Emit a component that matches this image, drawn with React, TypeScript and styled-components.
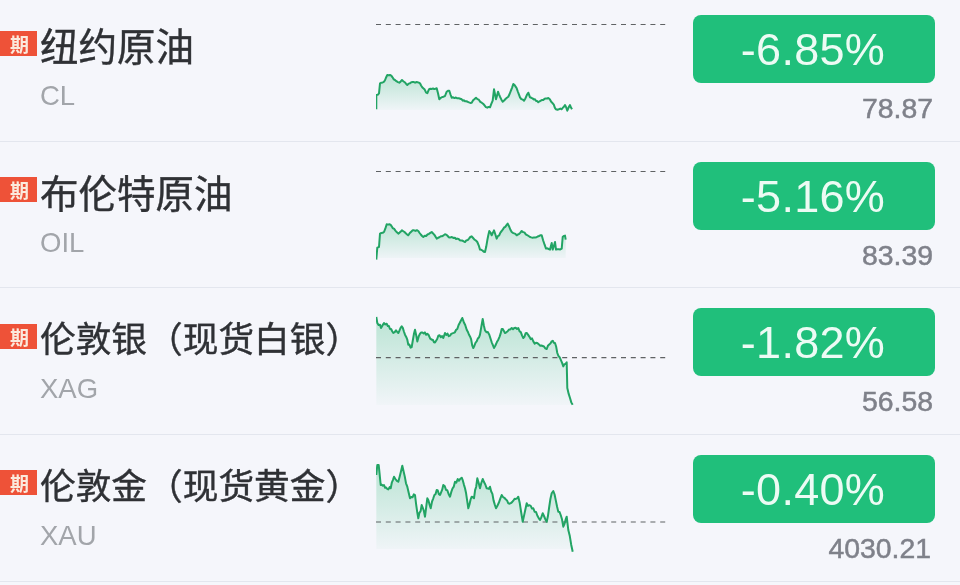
import { createGlobalStyle } from "styled-components"
import styled from "styled-components"

const GlobalStyle = createGlobalStyle`
  html, body {
    margin: 0;
    padding: 0;
    background: #f5f6fb;
  }
`

const Page = styled.div`
  width: 960px;
  height: 585px;
  overflow: hidden;
  background: #f5f6fb;
  font-family: "Liberation Sans", "Noto Sans CJK SC", sans-serif;
  filter: blur(0.4px);
`

const List = styled.div`
  margin-top: -5px;
`

const Row = styled.div`
  display: grid;
  grid-template-columns: 376px 290px 1fr;
  height: 146.67px;
  box-sizing: border-box;
  border-bottom: 1px solid #e3e6ee;
`

const Info = styled.div`
  padding-top: 26px;
`

const TitleLine = styled.div`
  display: flex;
  align-items: center;
  gap: 3px;
  height: 46px;
`

const Badge = styled.span`
  width: 37px;
  height: 25px;
  margin-top: -2px;
  background: #ee5238;
  color: #fbe9dc;
  font: 700 19px/25px "Noto Sans CJK SC", sans-serif;
  text-align: center;
  padding-left: 2px;
  box-sizing: border-box;
  flex: none;
`

const Title = styled.span<{ $size: number }>`
  font: 400 ${(p) => p.$size}px/46px "Noto Sans CJK SC", sans-serif;
  color: #2f3135;
  white-space: nowrap;
  -webkit-text-stroke: 0.4px #2f3135;
`

const Ticker = styled.div`
  margin: 12px 0 0 40px;
  font-size: 27.5px;
  line-height: 34px;
  color: #a2a5aa;
`

const Chart = styled.svg`
  display: block;
  width: 290px;
  height: 145px;
`

const Quote = styled.div`
  padding: 20px 25px 0 27px;
  display: flex;
  flex-direction: column;
  align-items: stretch;
`

const Pill = styled.div`
  height: 68px;
  padding-right: 2px;
  box-sizing: border-box;
  border-radius: 8px;
  background: #20bf7b;
  color: #ecfbf4;
  font-size: 45px;
  line-height: 70px;
  letter-spacing: 0.3px;
  text-align: center;
`

const Price = styled.div<{ $inset: number }>`
  margin-top: 8px;
  padding-right: ${(p) => p.$inset}px;
  font-size: 28.4px;
  line-height: 34px;
  color: #7f818a;
  text-align: right;
  -webkit-text-stroke: 0.5px #7f818a;
`

// small seeded wobble so the traced price lines stay jagged
const wobble = (seed: number) => {
  const v = Math.sin(seed * 127.1) * 43758.5453
  return (v - Math.floor(v)) * 2 - 1
}

const tracePath = (raw: number[], dy: number, noise: number) => {
  const out: [number, number][] = []
  for (let i = 0; i < raw.length - 2; i += 2) {
    const [x0, y0, x1, y1] = [raw[i], raw[i + 1], raw[i + 2], raw[i + 3]]
    const steps = Math.max(1, Math.round((x1 - x0) / 4))
    for (let s = 0; s < steps; s++) {
      const t = s / steps
      const jitter = s === 0 ? 0 : wobble(i * 7 + s) * noise
      out.push([(x0 + (x1 - x0) * t) / 3 - 6, (y0 + (y1 - y0) * t) / 3 + dy + jitter])
    }
  }
  out.push([raw[raw.length - 2] / 3 - 6, raw[raw.length - 1] / 3 + dy])
  return out
}

type Item = {
  name: string
  size: number
  ticker: string
  pct: string
  price: string
  priceInset: number
  dash: number
  floor: number
  dy: number
  noise: number
  line: number[]
}

const items: Item[] = [
  {
    name: "纽约原油",
    size: 38.5,
    ticker: "CL",
    pct: "-6.85%",
    price: "78.87",
    priceInset: 2,
    dash: 29.5,
    floor: 115,
    dy: 65,
    noise: 0.7,
    line: [
      19, 148, 19, 105, 27, 100, 30, 70, 42, 65, 52, 45, 60, 45, 75, 60, 88, 68, 96, 60, 112, 75, 128, 66,
      150, 70, 160, 85, 172, 100, 178, 87, 200, 85, 208, 118, 225, 108, 230, 95, 238, 92, 245, 113, 262, 115,
      275, 118, 285, 124, 305, 128, 318, 113, 335, 128, 352, 143, 360, 142, 368, 122, 372, 88, 378, 118,
      384, 95, 390, 110, 398, 125, 415, 110, 430, 72, 440, 85, 450, 112, 462, 122, 475, 98, 480, 112,
      495, 118, 505, 127, 520, 120, 535, 114, 548, 130, 558, 148, 575, 148, 585, 135, 592, 152, 600, 135, 606, 148,
    ],
  },
  {
    name: "布伦特原油",
    size: 38.5,
    ticker: "OIL",
    pct: "-5.16%",
    price: "83.39",
    priceInset: 2,
    dash: 29.5,
    floor: 116,
    dy: 68.3,
    noise: 0.7,
    line: [
      19, 148, 22, 112, 27, 110, 30, 70, 42, 65, 50, 42, 58, 42, 72, 55, 85, 70, 96, 60, 115, 75, 128, 60,
      145, 62, 160, 80, 185, 65, 200, 85, 225, 72, 240, 82, 262, 85, 285, 95, 305, 78, 322, 95, 330, 118,
      345, 125, 352, 90, 358, 62, 365, 75, 372, 60, 380, 85, 395, 62, 413, 40, 425, 65, 440, 75, 455, 62,
      480, 80, 495, 82, 515, 75, 528, 115, 540, 118, 545, 98, 548, 118, 555, 95, 558, 118, 575, 115, 578, 80, 585, 76, 587, 88,
    ],
  },
  {
    name: "伦敦银（现货白银）",
    size: 35.7,
    ticker: "XAG",
    pct: "-1.82%",
    price: "56.58",
    priceInset: 2,
    dash: 69.7,
    floor: 117,
    dy: 21.7,
    noise: 1.4,
    line: [
      19, 22, 22, 40, 30, 45, 33, 55, 42, 40, 50, 42, 60, 58, 70, 70, 78, 62, 85, 70, 95, 50, 105, 75, 112, 90,
      115, 105, 125, 112, 135, 60, 142, 95, 150, 72, 172, 72, 185, 90, 195, 98, 205, 78, 220, 85, 225, 70,
      240, 78, 262, 58, 277, 25, 290, 60, 300, 80, 310, 115, 320, 95, 330, 75, 338, 28, 345, 62, 358, 75,
      372, 115, 385, 90, 395, 58, 405, 70, 425, 55, 445, 55, 460, 85, 470, 70, 490, 95, 510, 108, 530, 118,
      545, 95, 555, 100, 562, 130, 572, 150, 580, 170, 590, 158, 592, 235, 600, 265, 608, 285,
    ],
  },
  {
    name: "伦敦金（现货黄金）",
    size: 35.7,
    ticker: "XAU",
    pct: "-0.40%",
    price: "4030.21",
    priceInset: 4,
    dash: 87,
    floor: 114,
    dy: 20,
    noise: 1.8,
    line: [
      19, 60, 22, 30, 26, 30, 32, 90, 42, 90, 52, 102, 62, 100, 72, 65, 85, 80, 97, 32, 108, 85, 120, 130,
      135, 120, 145, 190, 155, 150, 165, 185, 172, 130, 182, 160, 190, 130, 200, 105, 210, 120, 220, 90,
      240, 125, 255, 80, 275, 68, 285, 100, 295, 160, 305, 125, 312, 130, 322, 70, 330, 100, 338, 72,
      350, 100, 360, 95, 378, 160, 395, 120, 415, 145, 445, 125, 458, 200, 470, 145, 490, 160, 510, 195,
      518, 175, 530, 200, 545, 115, 550, 108, 565, 170, 572, 180, 580, 215, 590, 185, 595, 225, 608, 290,
    ],
  },
]

const Spark = ({ item, id }: { item: Item; id: string }) => {
  const pts = tracePath(item.line, item.dy, item.noise)
  const d = pts.map(([x, y]) => `${x.toFixed(1)},${y.toFixed(1)}`).join(" ")
  const first = pts[0]
  const last = pts[pts.length - 1]
  return (
    <Chart viewBox="0 0 290 145">
      <defs>
        <linearGradient id={id} x1="0" y1="0" x2="0" y2="1">
          <stop offset="0" stopColor="#23b56f" stopOpacity="0.28" />
          <stop offset="1" stopColor="#23b56f" stopOpacity="0.02" />
        </linearGradient>
      </defs>
      <polygon
        points={`${first[0]},${item.floor} ${d} ${last[0]},${item.floor}`}
        fill={`url(#${id})`}
      />
      <line x1="0" x2="289.2" y1={item.dash} y2={item.dash} stroke="#5f6264" strokeWidth="1.2" strokeDasharray="5 4.8" />
      <polyline points={d} fill="none" stroke="#22a464" strokeWidth="2" strokeLinejoin="round" />
    </Chart>
  )
}

export default function App() {
  return (
    <Page>
      <GlobalStyle />
      <List>
        {items.map((item, i) => (
          <Row key={item.ticker}>
            <Info>
              <TitleLine>
                <Badge>期</Badge>
                <Title $size={item.size}>{item.name}</Title>
              </TitleLine>
              <Ticker>{item.ticker}</Ticker>
            </Info>
            <Spark item={item} id={`fade-${i}`} />
            <Quote>
              <Pill>{item.pct}</Pill>
              <Price $inset={item.priceInset}>{item.price}</Price>
            </Quote>
          </Row>
        ))}
      </List>
    </Page>
  )
}
